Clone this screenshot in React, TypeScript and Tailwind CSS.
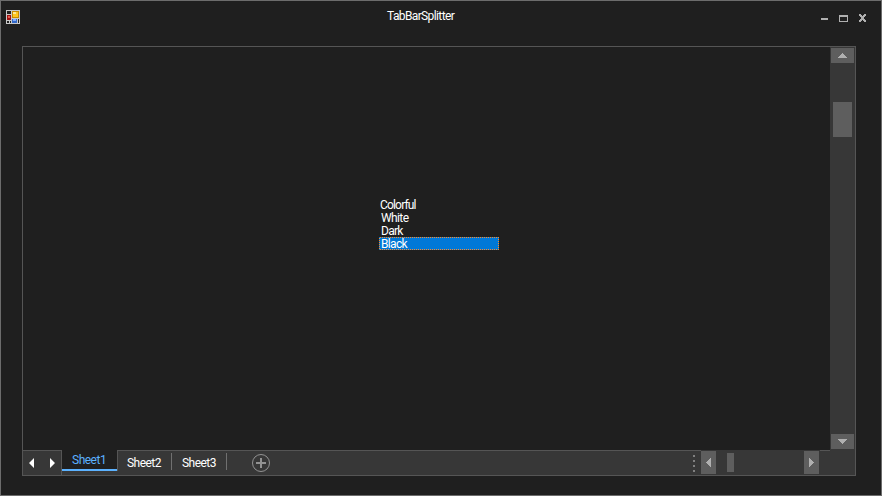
import React from "react";

function Arrow({ dir }: { dir: "up" | "down" | "left" | "right" }) {
  const vertical = dir === "up" || dir === "down";
  const paths = {
    up: "M4 0h1v1h1v1h1v1h1v1h1v1H0V4h1V3h1V2h1V1h1z",
    down: "M0 0h9v1H8v1H7v1H6v1H5v1H4V4H3V3H2V2H1V1H0z",
    left: "M5 0v9H4V8H3V7H2V6H1V5H0V4h1V3h1V2h1V1h1V0z",
    right: "M0 0v9h1V8h1V7h1V6h1V5h1V4H4V3H3V2H2V1H1V0z",
  };
  return (
    <svg width={vertical ? 9 : 5} height={vertical ? 5 : 9} fill="#b0b0b0" shapeRendering="crispEdges">
      <path d={paths[dir]} />
    </svg>
  );
}

function ScrollButton({ dir, className }: { dir: "up" | "down" | "left" | "right"; className: string }) {
  return <button className={`flex shrink-0 items-center justify-center bg-[#5e5e5e] ${className}`}><Arrow dir={dir} /></button>;
}

function AppIcon() {
  return (
    <svg width="14" height="14" shapeRendering="crispEdges">
      <path fill="#c8c8c8" d="M0 0h14v14H0z" />
      <path fill="#202020" d="M1 1h4v3H1zM1 11h2v2H1zM4 11h1v2H4zM12 9h1v4h-1z" />
      <path fill="#a01010" d="M1 5h4v5H1z" /><path fill="#e65c50" d="M2 6h2v2H2z" />
      <path fill="#c78a00" d="M6 1h7v7H6z" /><path fill="#ffc51f" d="M7 2h5v5H7z" /><path fill="#ffe994" d="M7 2h3v2H7z" />
      <path fill="#3268c8" d="M6 9h5v4H6z" /><path fill="#82adff" d="M7 9h3v2H7z" />
    </svg>
  );
}

export default function App() {
  return (
    <main className="flex h-[496px] w-[882px] flex-col border border-[#6c6c6c] bg-[#1f1f1f] font-['Roboto','Liberation_Sans',sans-serif] text-[12px] text-white">
      <header className="flex h-[45px] shrink-0 items-start pl-[5px]">
        <div className="mt-[9px] w-[381px] shrink-0"><AppIcon /></div>
        <h1 className="mt-[7px] w-[433px] whitespace-nowrap text-[12px] font-normal leading-[16px] tracking-[-0.62px]">TabBarSplitter</h1>
        <svg className="mt-[12px]" width="48" height="10" shapeRendering="crispEdges" fill="#b0b0b0">
          <path d="M1 5h7v2H1z" />
          <path fillRule="evenodd" d="M19 2h9v7h-9zM20 4v4h7V4z" />
          <path d="M39 1h2v1h1v1h1V2h1V1h2v2h-1v1h-1v2h1v1h1v2h-2V8h-1V7h-1v1h-1v1h-2V7h1V6h1V4h-1V3h-1z" />
          <path d="M39 2h3v1h-3zM43 2h3v1h-3zM39 7h3v1h-3zM43 7h3v1h-3z" />
        </svg>
      </header>
      <section className="ml-[21px] flex h-[430px] w-[834px] flex-col border border-[#555]">
        <div className="flex h-[403px] shrink-0">
          <div className="w-[807px] pl-[356px] pt-[151px]">
            <ul className="w-[120px] leading-[15px]">
              <li className="h-[13px] pl-[1px] tracking-[-0.82px]">Colorful</li>
              <li className="h-[13px] pl-[2px] tracking-[-0.6px]">White</li>
              <li className="h-[13px] pl-[2px] tracking-[-0.7px]">Dark</li>
              <li className="h-[13px] bg-[repeating-conic-gradient(#ff8a28_0_25%,#0078d7_0_50%)] bg-[length:2px_2px] p-[1px]">
                <div className="h-[11px] bg-[#0078d7] pl-[1px] leading-[13px] tracking-[-0.65px]">Black</div>
              </li>
            </ul>
          </div>
          <div className="flex w-[25px] flex-col bg-[#373737] px-[1px] pt-[1px]">
            <ScrollButton dir="up" className="h-[15px] w-[23px]" />
            <div className="ml-[2px] mt-[39px] h-[35px] w-[19px] bg-[#5e5e5e]" />
            <ScrollButton dir="down" className="mt-[297px] h-[15px] w-[23px]" />
          </div>
        </div>
        <footer className="flex h-[25px] shrink-0 bg-[#373737]">
          <div className="flex h-[25px] w-[39px] shrink-0 border-r border-t border-[#555] pl-[6px] pt-[7px]">
            <svg width="27" height="10" fill="#fff"><path d="M0 5 5 0v10zM21 0l5 5-5 5z" /></svg>
          </div>
          <div className="h-[21px] w-[55px] shrink-0 border-b-2 border-[#5cb2ff] bg-[#1f1f1f] pl-[10px] leading-[20px] tracking-[-0.5px] text-[#5cb2ff]">Sheet1</div>
          <nav className="flex h-[25px] w-[584px] shrink-0 border-t border-[#555] tracking-[-0.55px]">
            <div className="h-[20px] w-[54px] border-l border-[#555] pl-[9px] leading-[24px]">Sheet2</div>
            <div className="mt-[2px] h-[17px] w-[55px] border-l border-[#707070] pl-[10px] leading-[20px]">Sheet3</div>
            <div className="mt-[2px] h-[17px] w-[26px] border-l border-[#707070]" />
            <svg className="mt-[2px]" width="19" height="20" fill="none" stroke="#929292">
              <circle cx="9" cy="10" r="8.5" /><path strokeWidth="2" d="M9 5v10M4 10h10" />
            </svg>
            <svg className="ml-[422px] mt-[4px]" width="3" height="18" fill="#808080" shapeRendering="crispEdges">
              <path d="M0 0h2v2H0zM0 5h2v2H0zM0 10h2v2H0zM0 15h2v2H0z" />
            </svg>
          </nav>
          <div className="flex h-[25px] w-[119px] shrink-0 pt-[1px]">
            <ScrollButton dir="left" className="h-[23px] w-[15px]" />
            <div className="ml-[11px] mt-[2px] h-[19px] w-[7px] shrink-0 bg-[#5e5e5e]" />
            <ScrollButton dir="right" className="ml-[70px] h-[23px] w-[15px]" />
          </div>
          <div className="h-[1px] w-[10px] bg-[#555]" />
        </footer>
      </section>
    </main>
  );
}
